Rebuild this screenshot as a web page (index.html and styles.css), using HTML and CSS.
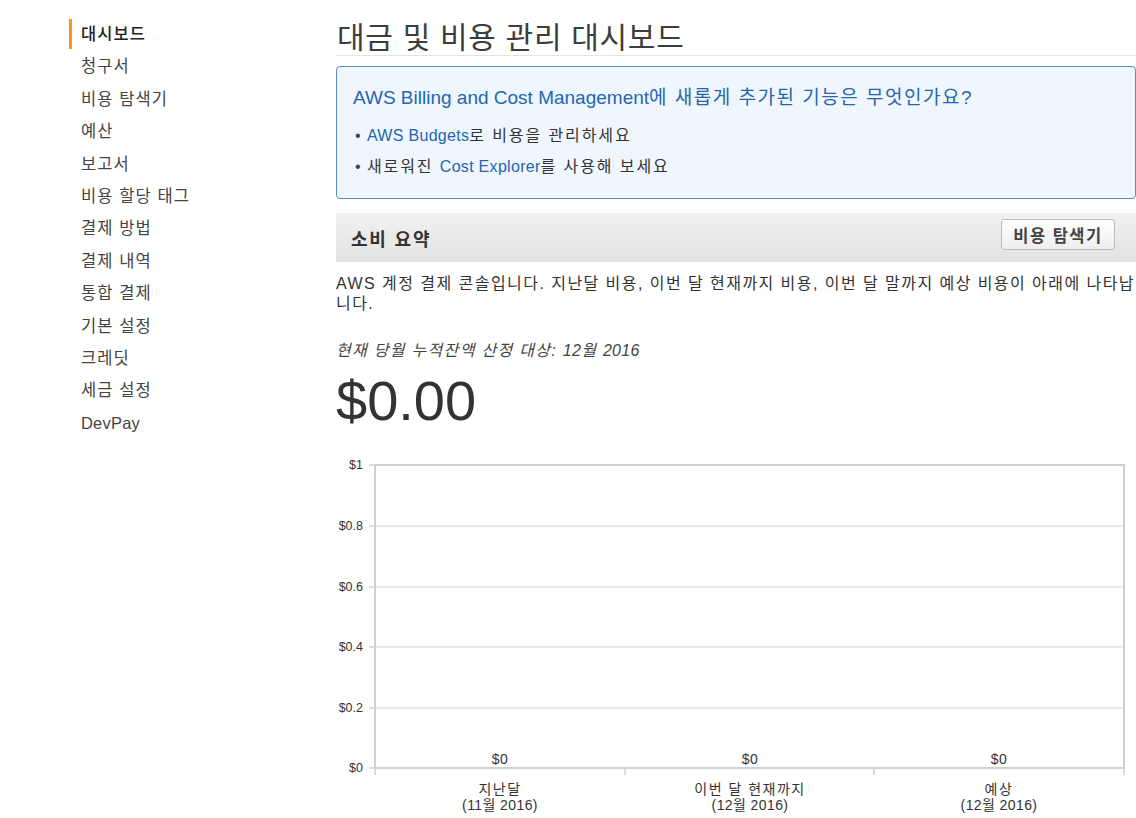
FILE: index.html
```html
<!DOCTYPE html>
<html lang="ko">
<head>
<meta charset="utf-8">
<title>대금 및 비용 관리 대시보드</title>
<link rel="stylesheet" href="styles.css">
</head>
<body>
<div class="page">
  <nav class="sidebar">
    <a class="nav-item active">대시보드</a>
    <a class="nav-item">청구서</a>
    <a class="nav-item">비용 탐색기</a>
    <a class="nav-item">예산</a>
    <a class="nav-item">보고서</a>
    <a class="nav-item">비용 할당 태그</a>
    <a class="nav-item">결제 방법</a>
    <a class="nav-item">결제 내역</a>
    <a class="nav-item">통합 결제</a>
    <a class="nav-item">기본 설정</a>
    <a class="nav-item">크레딧</a>
    <a class="nav-item">세금 설정</a>
    <a class="nav-item en">DevPay</a>
  </nav>
  <main class="main">
    <h1 class="title">대금 및 비용 관리 대시보드</h1>
    <section class="info-box">
      <h2 class="info-title"><span class="en">AWS Billing and Cost Management</span>에 새롭게 추가된 기능은 무엇인가요?</h2>
      <ul class="info-list">
        <li><span class="bullet">•</span> <a class="link en">AWS Budgets</a>로 비용을 관리하세요</li>
        <li><span class="bullet">•</span> 새로워진 <a class="link en">Cost Explorer</a>를 사용해 보세요</li>
      </ul>
    </section>
    <div class="summary-header">
      <h3 class="summary-title">소비 요약</h3>
      <button class="btn">비용 탐색기</button>
    </div>
    <p class="desc">AWS 계정 결제 콘솔입니다. 지난달 비용, 이번 달 현재까지 비용, 이번 달 말까지 예상 비용이 아래에 나타납니다.</p>
    <p class="period">현재 당월 누적잔액 산정 대상: <span class="en">12</span>월 <span class="en">2016</span></p>
    <div class="amount">$0.00</div>
    <svg class="chart" width="800" height="363" viewBox="0 0 800 363">
      <g class="grid">
        <line x1="39" y1="71" x2="788" y2="71"/>
        <line x1="39" y1="132" x2="788" y2="132"/>
        <line x1="39" y1="192" x2="788" y2="192"/>
        <line x1="39" y1="253" x2="788" y2="253"/>
      </g>
      <g class="ticks">
        <line x1="33" y1="10" x2="39" y2="10"/>
        <line x1="33" y1="71" x2="39" y2="71"/>
        <line x1="33" y1="132" x2="39" y2="132"/>
        <line x1="33" y1="192" x2="39" y2="192"/>
        <line x1="33" y1="253" x2="39" y2="253"/>
        <line x1="33" y1="313" x2="39" y2="313"/>
        <line x1="39" y1="313" x2="39" y2="320"/>
        <line x1="289" y1="313" x2="289" y2="320"/>
        <line x1="538" y1="313" x2="538" y2="320"/>
        <line x1="788" y1="313" x2="788" y2="320"/>
      </g>
      <g class="frame">
        <line x1="38" y1="10" x2="789" y2="10"/>
        <line x1="788" y1="10" x2="788" y2="313"/>
        <line x1="39" y1="10" x2="39" y2="314"/>
        <line x1="38" y1="313" x2="789" y2="313"/>
      </g>
      <g class="ylabels">
        <text x="27" y="14">$1</text>
        <text x="27" y="75">$0.8</text>
        <text x="27" y="136">$0.6</text>
        <text x="27" y="196">$0.4</text>
        <text x="27" y="257">$0.2</text>
        <text x="27" y="317">$0</text>
      </g>
      <g class="values">
        <text x="164" y="309">$0</text>
        <text x="414" y="309">$0</text>
        <text x="663" y="309">$0</text>
      </g>
      <g class="xlabels">
        <text class="ko" x="164" y="339">지난달</text>
        <text x="164" y="355">(11월 2016)</text>
        <text class="ko" x="414" y="339">이번 달 현재까지</text>
        <text x="414" y="355">(12월 2016)</text>
        <text class="ko" x="663" y="339">예상</text>
        <text x="663" y="355">(12월 2016)</text>
      </g>
    </svg>
  </main>
</div>
</body>
</html>
```

FILE: styles.css
```css
* { box-sizing: border-box; }
html, body {
  margin: 0;
  padding: 0;
  background: #fff;
}
body {
  font-family: "Liberation Sans", Arial, "Noto Sans CJK KR", sans-serif;
  color: #333;
  overflow: hidden;
}
.page {
  display: flex;
  width: 1136px;
  height: 818px;
}
.sidebar {
  width: 336px;
  flex: none;
  padding: 19px 0 0 69px;
  display: flex;
  flex-direction: column;
}
.nav-item {
  display: block;
  height: 30px;
  line-height: 30px;
  margin-bottom: 2.4px;
  padding-left: 9px;
  font-size: 16.5px;
  letter-spacing: 1.1px;
  color: #444;
  border-left: 3px solid transparent;
  cursor: pointer;
}
.nav-item.en { letter-spacing: 0.2px; }
.nav-item.active {
  border-left-color: #f7981d;
  color: #222;
  font-weight: 500;
}
.main {
  width: 800px;
  flex: none;
  padding-top: 21px;
}
.title {
  margin: 0;
  font-size: 30px;
  line-height: 34px;
  font-weight: normal;
  letter-spacing: 0.7px;
  color: #3d3d3d;
  border-bottom: 1px solid #e3e3e3;
  padding-left: 1px;
}
.info-box {
  margin-top: 10px;
  width: 800px;
  height: 133px;
  border: 1px solid #5b8ec9;
  border-radius: 4px;
  background: #eff6fd;
  padding: 19px 16px 0 16px;
}
.info-title {
  margin: 0 0 10px;
  font-size: 19px;
  line-height: 24px;
  font-weight: normal;
  letter-spacing: 1.5px;
  color: #2566b0;
}
.info-title .en { letter-spacing: 0; }
.info-list {
  list-style: none;
  margin: 0;
  padding: 0 0 0 2px;
  font-size: 16px;
  line-height: 31px;
  letter-spacing: 1.9px;
  color: #333;
}
.info-list .en { letter-spacing: 0.3px; }
.bullet { color: #444; letter-spacing: 0; }
.link { color: #2566b0; cursor: pointer; }
.summary-header {
  margin-top: 14px;
  height: 49px;
  display: flex;
  align-items: center;
  justify-content: space-between;
  padding: 0 21px 0 15px;
  background: linear-gradient(#f1f1f1, #e3e3e3);
}
.summary-title {
  margin: 0;
  font-size: 18px;
  letter-spacing: 1.8px;
  font-weight: bold;
  color: #333;
}
.btn {
  width: 114px;
  height: 31px;
  border: 1px solid #bdbdbd;
  border-radius: 3px;
  background: linear-gradient(#ffffff, #eeeeee);
  font-family: "Liberation Sans", "Noto Sans CJK KR", sans-serif;
  font-size: 16.5px;
  letter-spacing: 1.5px;
  font-weight: bold;
  color: #444;
  padding: 0;
  margin-top: -6px;
}
.desc {
  margin: 12px 0 0;
  font-size: 16px;
  line-height: 20px;
  letter-spacing: 1.45px;
  color: #333;
}
.period {
  margin: 28px 0 0;
  font-size: 16px;
  line-height: 18px;
  letter-spacing: 1.3px;
  font-style: italic;
  color: #444;
}
.period .en { letter-spacing: 0.3px; }
.amount {
  margin-top: 9px;
  font-size: 56px;
  line-height: 64px;
  color: #333;
}
.chart {
  display: block;
  margin-top: 22px;
}
.grid line { stroke: #e2e2e2; stroke-width: 1.5; }
.ticks line { stroke: #cfcfcf; stroke-width: 1.5; }
.frame line { stroke: #d0d0d0; stroke-width: 2; }
.ylabels text {
  font-family: "Liberation Sans", sans-serif;
  font-size: 12.5px;
  fill: #333;
  text-anchor: end;
}
.values text, .xlabels text {
  font-family: "Liberation Sans", "Noto Sans CJK KR", sans-serif;
  font-size: 14px;
  letter-spacing: 0.4px;
  fill: #333;
  text-anchor: middle;
}
.xlabels .ko { letter-spacing: 1.5px; }
```
